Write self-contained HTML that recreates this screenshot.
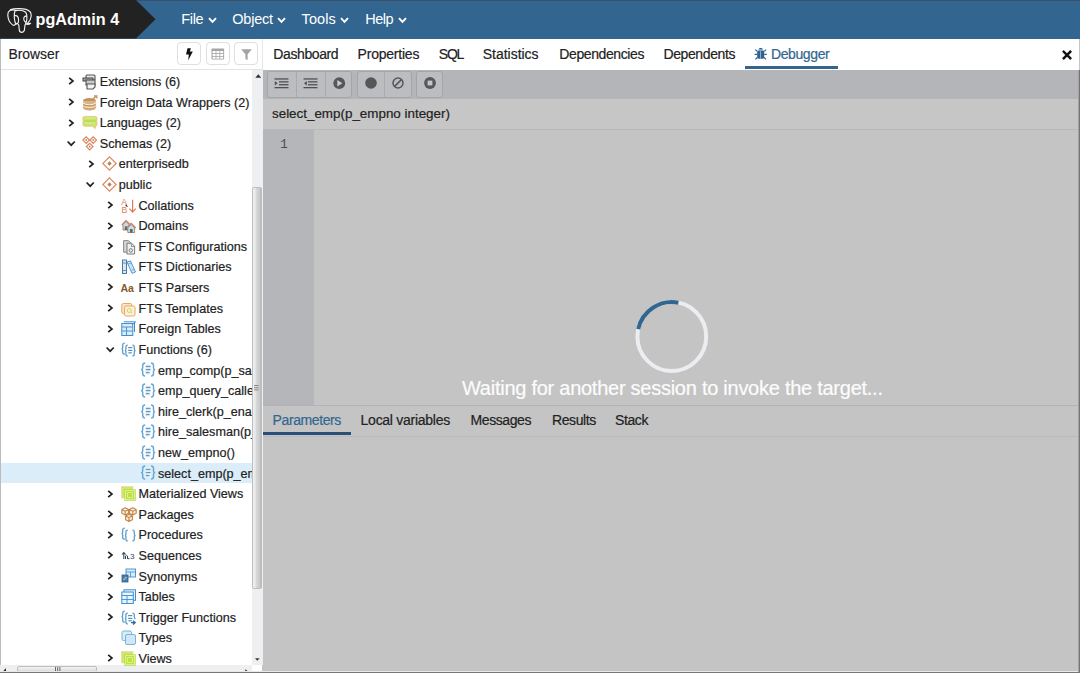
<!DOCTYPE html>
<html><head><meta charset="utf-8">
<style>
*{box-sizing:border-box;margin:0;padding:0}
html,body{width:1080px;height:673px;overflow:hidden;background:#fff;font-family:"Liberation Sans",sans-serif;color:#222}
.abs{position:absolute}
.menu{top:0.4px;height:38px;line-height:39px;color:#fff;font-size:14.5px;white-space:nowrap}
.menu svg{display:inline-block;vertical-align:middle;margin-left:4px;margin-top:0px}
.tbtn{top:42.3px;width:24.3px;height:22.8px;border:1px solid #dcdfe3;border-radius:4px;background:#fff}
.tab{-webkit-text-stroke:0.2px currentColor;top:38.5px;height:31px;line-height:31.2px;font-size:14px;letter-spacing:-0.4px;color:#222;white-space:nowrap}
.tt{-webkit-text-stroke:0.2px #222;height:20.607px;line-height:20.607px;font-size:12.6px;white-space:nowrap;color:#222}
#clip{position:absolute;left:0;top:69.5px;width:252px;height:596px;overflow:hidden}
#clipin{position:absolute;left:0;top:-69.5px;width:1080px;height:673px}
.dbtn{top:70.6px;height:27px;border:1px solid #a9aaad;background:#babbbe}
</style></head><body>
<div class="abs" style="left:0;top:0;width:1080px;height:38.5px;background:#326690"></div>
<div class="abs" style="left:0;top:0;width:1080px;height:1px;background:#3c5066"></div>
<svg class="abs" style="left:0;top:0" width="156" height="39" viewBox="0 0 156 39">
  <polygon points="0,0 136,0 155.5,19.2 136,38.5 0,38.5" fill="#222222"/>
</svg>
<svg class="abs" style="left:4px;top:5.6px" width="30" height="30" viewBox="0 0 30 30"><g fill="none" stroke="#f2f2f2" stroke-width="1.15" stroke-linecap="round" stroke-linejoin="round">
<path d="M11.2,4.3 C7,3.2 3.6,4.6 3.8,9 C4,13.5 6.3,17.3 8.6,18.9 C9.8,19.7 11,19 11.6,18.2"/>
<path d="M6.5,3.6 C10,2.6 17.5,2.2 22,3.4 C25.8,4.5 27.6,6.8 27.2,10 C26.9,13 25.4,15.6 23.6,17.2"/>
<path d="M11.6,18.2 C12.6,17.3 14.4,17.6 14.8,19.2 L15.3,24.2 C15.7,27 19.8,27 20.4,24.2 L21,19 C21.4,17.4 23,17.2 26.6,17.3 C25.5,18.3 24,18.6 22.6,18.3"/>
<path d="M11.2,4.3 C10.2,7 10.2,13 11.2,16.8 C12,18.6 14.6,18 14.6,14.5 C14.6,11 13.2,9.4 11.4,9.6"/>
<path d="M11.5,4.6 C15,4 19.5,4.5 21.4,6 C23,7.5 23,11 22.8,13.5 C22.6,15.5 22.3,16.6 21.6,17.6 M22.6,10.4 C20.5,9.6 19.6,11.5 19.8,13.2 C20,15 21.2,16.2 22.2,16"/>
</g></svg>
<div class="abs" style="left:35.5px;top:0;height:38px;line-height:39px;color:#fff;font-size:16.2px;font-weight:bold;white-space:nowrap">pgAdmin 4</div>
<div class="abs menu" style="left:181.2px;letter-spacing:-0.3px">File</div>
<div class="abs menu" style="left:232.3px;letter-spacing:-0.23px">Object</div>
<div class="abs menu" style="left:301.6px;letter-spacing:0.1px">Tools</div>
<div class="abs menu" style="left:365.2px;letter-spacing:-0.5px">Help</div>
<svg class="abs" style="left:207.6px;top:16.6px" width="9" height="7" viewBox="0 0 9 7"><path d="M1,1.2 L4.5,4.9 L8,1.2" stroke="#fff" stroke-width="1.9" fill="none"/></svg>
<svg class="abs" style="left:276.9px;top:16.6px" width="9" height="7" viewBox="0 0 9 7"><path d="M1,1.2 L4.5,4.9 L8,1.2" stroke="#fff" stroke-width="1.9" fill="none"/></svg>
<svg class="abs" style="left:340.3px;top:16.6px" width="9" height="7" viewBox="0 0 9 7"><path d="M1,1.2 L4.5,4.9 L8,1.2" stroke="#fff" stroke-width="1.9" fill="none"/></svg>
<svg class="abs" style="left:397.8px;top:16.6px" width="9" height="7" viewBox="0 0 9 7"><path d="M1,1.2 L4.5,4.9 L8,1.2" stroke="#fff" stroke-width="1.9" fill="none"/></svg>

<div class="abs" style="left:0;top:38.5px;width:262px;height:31px;border-bottom:1px solid #e3e3e3;background:#fff"></div>
<div class="abs" style="left:0;top:38.5px;width:1px;height:635px;background:#bcbcbc"></div>
<div class="abs" style="left:8.4px;top:38.5px;height:31px;line-height:31px;font-size:13.9px;color:#222;-webkit-text-stroke:0.15px #222">Browser</div>
<div class="abs tbtn" style="left:177px"></div>
<div class="abs tbtn" style="left:205.5px"></div>
<div class="abs tbtn" style="left:234px"></div>
<svg class="abs" style="left:185px;top:47px" width="9" height="14" viewBox="0 0 9 14"><path d="M2.5,1.2 L5.9,1.2 L4.8,4.4 L7.8,4.4 L3.2,13.6 L3.8,7.6 L1,7.6 Z" fill="#111"/></svg>
<svg class="abs" style="left:211px;top:47.5px" width="14" height="12" viewBox="0 0 14 12"><rect x="0.5" y="0.5" width="12.6" height="11" rx="0.8" fill="#a5a5a5"/><g fill="#fff"><rect x="1.6" y="3" width="3" height="2.1"/><rect x="5.4" y="3" width="3" height="2.1"/><rect x="9.2" y="3" width="3" height="2.1"/><rect x="1.6" y="5.9" width="3" height="2.1"/><rect x="5.4" y="5.9" width="3" height="2.1"/><rect x="9.2" y="5.9" width="3" height="2.1"/><rect x="1.6" y="8.8" width="3" height="1.9"/><rect x="5.4" y="8.8" width="3" height="1.9"/><rect x="9.2" y="8.8" width="3" height="1.9"/></g></svg>
<svg class="abs" style="left:240.5px;top:48.5px" width="11" height="12" viewBox="0 0 11 12"><path d="M0.2,0.3 H10.8 L6.6,5.2 V11.3 L4.4,9.8 V5.2 Z" fill="#a3a3a3"/></svg>
<div class="abs" style="left:262px;top:38.5px;width:1px;height:31px;background:#e4e6ea"></div>

<div class="abs" style="left:263px;top:38.5px;width:817px;height:31px;background:#fff"></div>
<div class="abs tab" style="left:273.3px">Dashboard</div>
<div class="abs tab" style="left:357.6px;letter-spacing:-0.22px">Properties</div>
<div class="abs tab" style="left:438.8px;letter-spacing:-1.2px">SQL</div>
<div class="abs tab" style="left:482.8px;letter-spacing:-0.03px">Statistics</div>
<div class="abs tab" style="left:559.3px">Dependencies</div>
<div class="abs tab" style="left:663.5px">Dependents</div>
<div class="abs tab" style="left:771px;color:#326690">Debugger</div>
<div class="abs" style="left:745px;top:66px;width:93px;height:2.5px;background:#326690"></div>

<div class="abs" style="left:262px;top:69.5px;width:818px;height:604px;background:#c4c4c4"></div>
<div class="abs" style="left:263px;top:69.5px;width:817px;height:29px;background:#b4b5b8"></div>
<div class="abs" style="left:263px;top:98.5px;width:817px;height:31px;background:#c6c6c6;border-bottom:1px solid #b8b9bc"></div>
<div class="abs" style="left:272px;top:99.3px;height:30px;line-height:30.6px;font-size:13.4px;color:#222;-webkit-text-stroke:0.2px #222">select_emp(p_empno integer)</div>
<div class="abs" style="left:263px;top:129.5px;width:51px;height:275px;background:#b5b6b9"></div>
<div class="abs" style="left:263px;top:404.5px;width:817px;height:1px;background:#b5b6b9"></div>

<!-- bug icon -->
<svg class="abs" style="left:754px;top:47px" width="14" height="14" viewBox="0 0 14 14"><g fill="#2d6190">
<path d="M4.4,2.8 C4.5,0.4 8.9,0.4 9,2.8 Z"/>
<rect x="3.2" y="3.2" width="7" height="8.6" rx="1.6"/></g>
<path d="M3.4,4.4 L1.2,2.6 M10,4.4 L12.2,2.6 M3.2,7.4 H0.7 M10.2,7.4 H12.7 M3.4,10.4 L1.4,12.4 M10,10.4 L12,12.4" stroke="#2d6190" stroke-width="1.2" fill="none"/>
<rect x="3" y="2.75" width="7.4" height="0.5" fill="#fff"/><rect x="6.35" y="4.2" width="0.7" height="7.4" fill="#c5d5e3"/></svg>
<!-- close -->
<svg class="abs" style="left:1061.5px;top:49.5px" width="10" height="10" viewBox="0 0 10 10"><path d="M1.8,1.8 L8.2,8.2 M8.2,1.8 L1.8,8.2" stroke="#111" stroke-width="2.5" stroke-linecap="square"/></svg>

<!-- debugger toolbar buttons -->
<div class="abs" style="left:266.7px;top:70.6px;width:85.8px;height:27.2px;border:1px solid #a4a5a8;border-radius:3px;background:#bcbdc0"></div>
<div class="abs" style="left:296px;top:70.6px;width:1px;height:27.2px;background:#a9aaad"></div>
<div class="abs" style="left:325px;top:70.6px;width:1px;height:27.2px;background:#a9aaad"></div>
<div class="abs" style="left:356.8px;top:70.6px;width:55px;height:27.2px;border:1px solid #a4a5a8;border-radius:3px;background:#bcbdc0"></div>
<div class="abs" style="left:384px;top:70.6px;width:1px;height:27.2px;background:#a9aaad"></div>
<div class="abs" style="left:415.9px;top:70.6px;width:27.4px;height:27.2px;border:1px solid #a4a5a8;border-radius:3px;background:#bcbdc0"></div>
<svg class="abs" style="left:273.5px;top:77.5px" width="15" height="11" viewBox="0 0 15 11"><g fill="#505050"><rect x="0.5" y="0.3" width="14" height="1.3"/><rect x="5" y="3.2" width="9.5" height="1.3"/><rect x="5" y="6.1" width="9.5" height="1.3"/><rect x="0.5" y="9" width="14" height="1.3"/><path d="M0.8,3 L3.6,5.3 L0.8,7.6 Z"/></g></svg>
<svg class="abs" style="left:303px;top:77.5px" width="15" height="11" viewBox="0 0 15 11"><g fill="#505050"><rect x="0.5" y="0.3" width="14" height="1.3"/><rect x="5" y="3.2" width="9.5" height="1.3"/><rect x="5" y="6.1" width="9.5" height="1.3"/><rect x="0.5" y="9" width="14" height="1.3"/><path d="M3.8,3 L1,5.3 L3.8,7.6 Z"/></g></svg>
<svg class="abs" style="left:332.5px;top:77.2px" width="13" height="13" viewBox="0 0 13 13"><circle cx="6.25" cy="6.2" r="5.9" fill="#575757"/><path d="M4.3,2.9 L9.4,6.2 L4.3,9.5 Z" fill="#c9cacc"/></svg>
<svg class="abs" style="left:365px;top:77.3px" width="13" height="13" viewBox="0 0 13 13"><circle cx="6" cy="6" r="5.8" fill="#575757"/></svg>
<svg class="abs" style="left:392px;top:77.3px" width="13" height="13" viewBox="0 0 13 13"><circle cx="6" cy="6" r="5" fill="none" stroke="#575757" stroke-width="1.5"/><path d="M9.4,2.6 L2.6,9.4" stroke="#575757" stroke-width="1.5"/></svg>
<svg class="abs" style="left:424px;top:77.2px" width="13" height="13" viewBox="0 0 13 13"><circle cx="6" cy="6" r="5.9" fill="#575757"/><rect x="3.6" y="3.6" width="4.8" height="4.8" fill="#c4c5c7"/></svg>

<!-- line number -->
<div class="abs" style="left:280.3px;top:134.8px;height:20px;line-height:20px;font-family:'Liberation Mono',monospace;font-size:12.4px;color:#4a4a4a">1</div>

<!-- spinner -->
<svg class="abs" style="left:630px;top:295px" width="84" height="84" viewBox="0 0 84 84">
<circle cx="41.8" cy="41.5" r="34.4" fill="none" stroke="#ebedf0" stroke-width="4"/>
<path d="M48.4,7.7 A34.4,34.4 0 0 0 8.2,34.2" fill="none" stroke="#326690" stroke-width="4"/>
</svg>
<div class="abs" style="left:462px;top:375.5px;height:24px;line-height:24px;font-size:20px;letter-spacing:-0.26px;color:#fcfcfc;-webkit-text-stroke:0.2px #fcfcfc;white-space:nowrap">Waiting for another session to invoke the target...</div>

<!-- lower tabs -->
<div class="abs" style="left:263px;top:405px;width:817px;height:1px;background:#b3b4b7"></div>
<div class="abs tab" style="left:272.6px;top:405px;height:30px;line-height:30px;color:#326690">Parameters</div>
<div class="abs tab" style="left:360.6px;top:405px;height:30px;line-height:30px;letter-spacing:-0.27px">Local variables</div>
<div class="abs tab" style="left:470.5px;top:405px;height:30px;line-height:30px">Messages</div>
<div class="abs tab" style="left:552px;top:405px;height:30px;line-height:30px">Results</div>
<div class="abs tab" style="left:615px;top:405px;height:30px;line-height:30px">Stack</div>
<div class="abs" style="left:263px;top:432.3px;width:88px;height:2.5px;background:#2a4f77"></div>
<div class="abs" style="left:263px;top:435.5px;width:817px;height:1px;background:#b8b9bc"></div>

<!-- tree scrollbars -->
<div class="abs" style="left:252.2px;top:69.8px;width:10.6px;height:595.5px;background:#eeeff1"></div>
<div class="abs" style="left:251.8px;top:187px;width:9.8px;height:402px;background:linear-gradient(to right,#f3f3f4 0%,#e4e5e7 30%,#d1d2d2 50%,#cfd0d0 75%,#bdbec1 92%);border:1px solid #bdbdbd;border-radius:2px"></div>
<svg class="abs" style="left:254px;top:385px" width="5" height="6" viewBox="0 0 5 6"><g fill="#8a8a8a"><rect x="0" y="0" width="4.6" height="1"/><rect x="0" y="2.2" width="4.6" height="1"/><rect x="0" y="4.4" width="4.6" height="1"/></g></svg>
<svg class="abs" style="left:254.8px;top:73.5px" width="7" height="4" viewBox="0 0 7 4"><path d="M0.3,3.8 L3.3,0.3 L6.3,3.8 Z" fill="#333"/></svg>
<svg class="abs" style="left:255px;top:657.8px" width="5" height="3" viewBox="0 0 5 3"><path d="M0,0.2 H4.6 L2.3,2.8 Z" fill="#333"/></svg>
<div class="abs" style="left:0;top:665.3px;width:252.2px;height:6px;background:#eeeff1"></div>
<div class="abs" style="left:17px;top:665.5px;width:80px;height:6px;background:linear-gradient(to bottom,#f4f4f4,#dcdcdc);border:1px solid #bdbdbd;border-radius:2px"></div>
<svg class="abs" style="left:54.5px;top:667px" width="6" height="4" viewBox="0 0 6 4"><g fill="#666"><rect x="0" y="0" width="1" height="4"/><rect x="2.2" y="0" width="1" height="4"/><rect x="4.4" y="0" width="1" height="4"/></g></svg>
<svg class="abs" style="left:3px;top:668px" width="4" height="4" viewBox="0 0 4 4"><path d="M3,0.3 V3.7 L0.3,3 Z" fill="#222"/></svg>
<svg class="abs" style="left:244.5px;top:668.5px" width="3" height="4" viewBox="0 0 3 4"><path d="M0.3,0.3 L2.6,2 L0.3,3.7 Z" fill="#222"/></svg>
<div class="abs" style="left:0;top:671px;width:1080px;height:1px;background:#e8e8e8"></div>
<div class="abs" style="left:0;top:672px;width:1080px;height:1px;background:#777"></div>
<div class="abs" style="left:1079px;top:38.5px;width:1px;height:31px;background:#c4c4c4"></div>
<div class="abs" style="left:1079px;top:69.5px;width:1px;height:603.5px;background:#747474"></div>
<div class="abs" style="left:1078px;top:69.5px;width:1px;height:602px;background:#a4a4a4"></div>

<div id="clip"><div id="clipin">
<div class="abs" style="left:1px;top:462.93px;width:251.5px;height:20.41px;background:#daedf9"></div>
<svg class="abs" style="left:68.00px;top:77.40px" width="7" height="8" viewBox="0 0 7 8"><path d="M1.2 0.8 L5 4 L1.2 7.2" stroke="#222" stroke-width="1.7" fill="none" stroke-linejoin="miter"/></svg>
<svg class="abs" style="left:82.30px;top:73.90px" width="16" height="16" viewBox="0 0 16 16"><rect x="4" y="1" width="9" height="5" rx="1" fill="#e6e6e6" stroke="#555" stroke-width="1.1"/>
<rect x="1" y="4" width="10" height="3" fill="#aaa" stroke="#444" stroke-width="1"/>
<rect x="4" y="6" width="9" height="5" fill="#c9c9c9" stroke="#555" stroke-width="1.1"/>
<path d="M5 10 H13 V13 L11 15 H5 Z" fill="#f2f2f2" stroke="#555" stroke-width="1.1"/></svg>
<div class="abs tt" style="left:99.80px;top:72.00px">Extensions (6)</div>
<svg class="abs" style="left:68.00px;top:98.01px" width="7" height="8" viewBox="0 0 7 8"><path d="M1.2 0.8 L5 4 L1.2 7.2" stroke="#222" stroke-width="1.7" fill="none" stroke-linejoin="miter"/></svg>
<svg class="abs" style="left:82.30px;top:94.51px" width="16" height="16" viewBox="0 0 16 16"><ellipse cx="7.5" cy="5.5" rx="6.3" ry="2.6" fill="#c69257"/>
<path d="M1.2 6 V8.5 A6.3 2.4 0 0 0 13.8 8.5 V6" fill="#d8b48c"/>
<path d="M1.2 9 V11 A6.3 2.4 0 0 0 13.8 11 V9" fill="#c69257"/>
<path d="M1.2 11.6 V13 A6.3 2.4 0 0 0 13.8 13 V11.6" fill="#d2a878"/>
<path d="M1.5 8.2 A6.3 2.2 0 0 0 13.5 8.2 M1.5 10.8 A6.3 2.2 0 0 0 13.5 10.8" stroke="#fff" stroke-width="0.9" fill="none"/>
<path d="M11 4 L14.5 0.8 M12 0.8 H14.8 V3.5" stroke="#c69257" stroke-width="1.3" fill="none"/></svg>
<div class="abs tt" style="left:99.80px;top:92.61px">Foreign Data Wrappers (2)</div>
<svg class="abs" style="left:68.00px;top:118.61px" width="7" height="8" viewBox="0 0 7 8"><path d="M1.2 0.8 L5 4 L1.2 7.2" stroke="#222" stroke-width="1.7" fill="none" stroke-linejoin="miter"/></svg>
<svg class="abs" style="left:82.30px;top:115.11px" width="16" height="16" viewBox="0 0 16 16"><path d="M2.6,1.4 H13.2 Q15,1.4 15,3.3 V4.6 Q15,6 14.4,6.2 Q15,6.6 15,7.8 V9.4 Q15,11 13.6,11.2 L13.2,13.6 L10.4,11.2 H2.6 Q0.9,11.2 0.9,9.4 V7.8 Q0.9,6.6 1.5,6.2 Q0.9,6 0.9,4.6 V3.3 Q0.9,1.4 2.6,1.4 Z" fill="#c9e66b" stroke="#f0b27c" stroke-width="0.7"/>
<path d="M2,6.1 H14" stroke="#a9cf45" stroke-width="0.9"/>
<path d="M3,3 H13 M3,8 H13" stroke="#daf08e" stroke-width="1.2"/></svg>
<div class="abs tt" style="left:99.80px;top:113.21px">Languages (2)</div>
<svg class="abs" style="left:66.50px;top:140.02px" width="9" height="7" viewBox="0 0 9 7"><path d="M0.6 1.5 L4.2 5.2 L7.8 1.5" stroke="#222" stroke-width="1.7" fill="none"/></svg>
<svg class="abs" style="left:82.30px;top:135.72px" width="16" height="16" viewBox="0 0 16 16"><g fill="none" stroke="#d9835b" stroke-width="1.2">
<path d="M4.2 0.8 L7.5 4.1 L4.2 7.4 L0.9 4.1 Z"/><path d="M11.2 0.8 L14.5 4.1 L11.2 7.4 L7.9 4.1 Z"/><path d="M7.7 7.3 L11 10.6 L7.7 13.9 L4.4 10.6 Z"/></g>
<g fill="#b9814f"><rect x="3.4" y="3.3" width="1.6" height="1.6"/><rect x="10.4" y="3.3" width="1.6" height="1.6"/><rect x="6.9" y="9.8" width="1.6" height="1.6"/></g></svg>
<div class="abs tt" style="left:99.80px;top:133.82px">Schemas (2)</div>
<svg class="abs" style="left:87.60px;top:159.83px" width="7" height="8" viewBox="0 0 7 8"><path d="M1.2 0.8 L5 4 L1.2 7.2" stroke="#222" stroke-width="1.7" fill="none" stroke-linejoin="miter"/></svg>
<svg class="abs" style="left:101.70px;top:156.33px" width="16" height="16" viewBox="0 0 16 16"><path d="M7.5 0.8 L14.2 7.5 L7.5 14.2 L0.8 7.5 Z" fill="none" stroke="#db8a63" stroke-width="1.2"/>
<path d="M7.5 5.3 L9.7 7.5 L7.5 9.7 L5.3 7.5 Z" fill="#b7834f"/></svg>
<div class="abs tt" style="left:118.80px;top:154.43px">enterprisedb</div>
<svg class="abs" style="left:86.10px;top:181.23px" width="9" height="7" viewBox="0 0 9 7"><path d="M0.6 1.5 L4.2 5.2 L7.8 1.5" stroke="#222" stroke-width="1.7" fill="none"/></svg>
<svg class="abs" style="left:101.70px;top:176.94px" width="16" height="16" viewBox="0 0 16 16"><path d="M7.5 0.8 L14.2 7.5 L7.5 14.2 L0.8 7.5 Z" fill="none" stroke="#db8a63" stroke-width="1.2"/>
<path d="M7.5 5.3 L9.7 7.5 L7.5 9.7 L5.3 7.5 Z" fill="#b7834f"/></svg>
<div class="abs tt" style="left:118.80px;top:175.03px">public</div>
<svg class="abs" style="left:107.00px;top:201.04px" width="7" height="8" viewBox="0 0 7 8"><path d="M1.2 0.8 L5 4 L1.2 7.2" stroke="#222" stroke-width="1.7" fill="none" stroke-linejoin="miter"/></svg>
<svg class="abs" style="left:121.30px;top:197.54px" width="16" height="16" viewBox="0 0 16 16"><text x="0.3" y="7.2" font-family="Liberation Sans" font-size="8.6" fill="#e07b54">A</text>
<text x="0.6" y="15" font-family="Liberation Sans" font-size="8.6" fill="#e07b54">B</text>
<path d="M4.6 6.8 L6.4 8.6" stroke="#222" stroke-width="1.1"/>
<path d="M11.6 1.8 V14 M8.4 10.6 L11.6 14 L14.8 10.6" stroke="#e07b54" stroke-width="1.2" fill="none"/></svg>
<div class="abs tt" style="left:138.50px;top:195.64px">Collations</div>
<svg class="abs" style="left:107.00px;top:221.65px" width="7" height="8" viewBox="0 0 7 8"><path d="M1.2 0.8 L5 4 L1.2 7.2" stroke="#222" stroke-width="1.7" fill="none" stroke-linejoin="miter"/></svg>
<svg class="abs" style="left:121.30px;top:218.15px" width="16" height="16" viewBox="0 0 16 16"><path d="M0.8 7 L5 2.5 L9 6.5" stroke="#e07b54" stroke-width="1.2" fill="none"/>
<path d="M2 6.5 V12 H8 V6.5 L5 3.5 Z" fill="#bfe0f4" stroke="#777" stroke-width="0.8"/>
<rect x="3.8" y="8.3" width="2.4" height="3.7" fill="#8a5a2b"/>
<path d="M5.5 10 L10.2 5.3 L14.8 10" stroke="#e07b54" stroke-width="1.2" fill="none"/>
<path d="M6.8 9.5 V14.5 H13.6 V9.5 L10.2 6.5 Z" fill="#bfe0f4" stroke="#777" stroke-width="0.8"/>
<rect x="9" y="11" width="2.6" height="3.5" fill="#8a5a2b"/></svg>
<div class="abs tt" style="left:138.50px;top:216.25px">Domains</div>
<svg class="abs" style="left:107.00px;top:242.26px" width="7" height="8" viewBox="0 0 7 8"><path d="M1.2 0.8 L5 4 L1.2 7.2" stroke="#222" stroke-width="1.7" fill="none" stroke-linejoin="miter"/></svg>
<svg class="abs" style="left:121.30px;top:238.76px" width="16" height="16" viewBox="0 0 16 16"><path d="M2.6,1.6 H7.5 L9.5,3.6 V13.2 H2.6 Z" fill="#d4d4d4" stroke="#8a8a8a" stroke-width="1"/>
<path d="M6,4.2 H10.6 L13.6,7.2 V15 H6 Z" fill="#f0f0f0" stroke="#7a7a7a" stroke-width="1"/>
<path d="M10.4,4.3 V7.4 H13.5" fill="none" stroke="#7a7a7a" stroke-width="0.8"/>
<circle cx="9.8" cy="11.4" r="1.7" fill="none" stroke="#7a7a7a" stroke-width="1"/></svg>
<div class="abs tt" style="left:138.50px;top:236.86px">FTS Configurations</div>
<svg class="abs" style="left:107.00px;top:262.86px" width="7" height="8" viewBox="0 0 7 8"><path d="M1.2 0.8 L5 4 L1.2 7.2" stroke="#222" stroke-width="1.7" fill="none" stroke-linejoin="miter"/></svg>
<svg class="abs" style="left:121.30px;top:259.36px" width="16" height="16" viewBox="0 0 16 16"><rect x="1.5" y="1" width="4" height="13.5" fill="#d5e8f5" stroke="#3f6f9a" stroke-width="0.9"/>
<path d="M2 4 H5 M2 11.5 H5" stroke="#3f6f9a" stroke-width="0.7"/>
<path d="M6 3 L9.5 1.8 L14.5 13 L11 14.3 Z" fill="#cde6f7" stroke="#4a90c8" stroke-width="0.9"/>
<path d="M7.3 5 L10 4 M10.5 11.2 L13 10.2" stroke="#4a90c8" stroke-width="0.7"/></svg>
<div class="abs tt" style="left:138.50px;top:257.46px">FTS Dictionaries</div>
<svg class="abs" style="left:107.00px;top:283.47px" width="7" height="8" viewBox="0 0 7 8"><path d="M1.2 0.8 L5 4 L1.2 7.2" stroke="#222" stroke-width="1.7" fill="none" stroke-linejoin="miter"/></svg>
<svg class="abs" style="left:121.30px;top:279.97px" width="16" height="16" viewBox="0 0 16 16"><text x="-0.6" y="12" font-family="Liberation Sans" font-weight="bold" font-size="10.6" fill="#8a5a2b">Aa</text></svg>
<div class="abs tt" style="left:138.50px;top:278.07px">FTS Parsers</div>
<svg class="abs" style="left:107.00px;top:304.08px" width="7" height="8" viewBox="0 0 7 8"><path d="M1.2 0.8 L5 4 L1.2 7.2" stroke="#222" stroke-width="1.7" fill="none" stroke-linejoin="miter"/></svg>
<svg class="abs" style="left:121.30px;top:300.58px" width="16" height="16" viewBox="0 0 16 16"><rect x="0.8" y="2.5" width="10" height="10" rx="1.5" fill="#fbe6c9" stroke="#e8a95c" stroke-width="1"/>
<rect x="3.5" y="5" width="10.5" height="10" rx="1.5" fill="#fdf0dc" stroke="#e8a95c" stroke-width="1"/>
<circle cx="8.3" cy="9.5" r="2" fill="none" stroke="#c8d95a" stroke-width="1"/>
<path d="M9.8 11 L11.2 12.4" stroke="#c8d95a" stroke-width="1"/></svg>
<div class="abs tt" style="left:138.50px;top:298.68px">FTS Templates</div>
<svg class="abs" style="left:107.00px;top:324.68px" width="7" height="8" viewBox="0 0 7 8"><path d="M1.2 0.8 L5 4 L1.2 7.2" stroke="#222" stroke-width="1.7" fill="none" stroke-linejoin="miter"/></svg>
<svg class="abs" style="left:121.30px;top:321.18px" width="16" height="16" viewBox="0 0 16 16"><rect x="0.8" y="2.5" width="11" height="12" fill="#d9ecf9" stroke="#3e8ed0" stroke-width="1"/>
<path d="M0.8 6 H11.8 M0.8 10 H11.8 M5.5 6 V14.5" stroke="#3e8ed0" stroke-width="0.9"/>
<path d="M3 0.8 H13.5 V11" stroke="#3e8ed0" stroke-width="1" fill="none"/>
<path d="M11 3.5 L15 0.5" stroke="#3e8ed0" stroke-width="1"/></svg>
<div class="abs tt" style="left:138.50px;top:319.28px">Foreign Tables</div>
<svg class="abs" style="left:105.50px;top:346.09px" width="9" height="7" viewBox="0 0 9 7"><path d="M0.6 1.5 L4.2 5.2 L7.8 1.5" stroke="#222" stroke-width="1.7" fill="none"/></svg>
<svg class="abs" style="left:121.30px;top:341.79px" width="16" height="16" viewBox="0 0 16 16"><g fill="none" stroke="#5f9fcb" stroke-width="1.3">
<path d="M3.8,1.1 Q1.7,1.1 1.7,3.2 V5.6 Q1.7,6.7 0.5,6.7 Q1.7,6.7 1.7,7.8 V10.2 Q1.7,12.2 3.8,12.2"/>
<path d="M6.8,3.1 Q4.9,3.1 4.9,5 V7.4 Q4.9,8.5 3.9,8.5 Q4.9,8.5 4.9,9.6 V11.9 Q4.9,13.8 6.8,13.8"/>
<path d="M11.4,3.1 Q13.3,3.1 13.3,5 V7.4 Q13.3,8.5 14.6,8.5 Q13.3,8.5 13.3,9.6 V11.9 Q13.3,13.8 11.4,13.8"/></g><g fill="#5a8fb8"><rect x="7.1" y="5" width="4.2" height="1.2"/><rect x="7.1" y="7.8" width="4.2" height="1.2"/><rect x="7.4" y="10.2" width="3.4" height="1.2"/></g></svg>
<div class="abs tt" style="left:138.50px;top:339.89px">Functions (6)</div>
<svg class="abs" style="left:140.30px;top:362.40px" width="16" height="16" viewBox="0 0 16 16"><g fill="none" stroke="#6aa8d4" stroke-width="1.45">
<path d="M5.2,0.9 Q2.7,0.9 2.7,3.4 V5.9 Q2.7,7.6 1,7.6 Q2.7,7.6 2.7,9.3 V11.6 Q2.7,14.1 5.2,14.1"/>
<path d="M11,0.9 Q13.5,0.9 13.5,3.4 V5.9 Q13.5,7.6 15.2,7.6 Q13.5,7.6 13.5,9.3 V11.6 Q13.5,14.1 11,14.1"/></g>
<rect x="5.4" y="2.6" width="5.4" height="10" fill="#eef6fc"/><g fill="#6399c2"><rect x="5.8" y="3.8" width="4.7" height="1.35"/><rect x="5.8" y="6.9" width="4.7" height="1.35"/><rect x="5.8" y="9.9" width="3.7" height="1.35"/></g></svg>
<div class="abs tt" style="left:158.00px;top:360.50px">emp_comp(p_sal numeric, p_comm numeric)</div>
<svg class="abs" style="left:140.30px;top:383.00px" width="16" height="16" viewBox="0 0 16 16"><g fill="none" stroke="#6aa8d4" stroke-width="1.45">
<path d="M5.2,0.9 Q2.7,0.9 2.7,3.4 V5.9 Q2.7,7.6 1,7.6 Q2.7,7.6 2.7,9.3 V11.6 Q2.7,14.1 5.2,14.1"/>
<path d="M11,0.9 Q13.5,0.9 13.5,3.4 V5.9 Q13.5,7.6 15.2,7.6 Q13.5,7.6 13.5,9.3 V11.6 Q13.5,14.1 11,14.1"/></g>
<rect x="5.4" y="2.6" width="5.4" height="10" fill="#eef6fc"/><g fill="#6399c2"><rect x="5.8" y="3.8" width="4.7" height="1.35"/><rect x="5.8" y="6.9" width="4.7" height="1.35"/><rect x="5.8" y="9.9" width="3.7" height="1.35"/></g></svg>
<div class="abs tt" style="left:158.00px;top:381.11px">emp_query_caller()</div>
<svg class="abs" style="left:140.30px;top:403.61px" width="16" height="16" viewBox="0 0 16 16"><g fill="none" stroke="#6aa8d4" stroke-width="1.45">
<path d="M5.2,0.9 Q2.7,0.9 2.7,3.4 V5.9 Q2.7,7.6 1,7.6 Q2.7,7.6 2.7,9.3 V11.6 Q2.7,14.1 5.2,14.1"/>
<path d="M11,0.9 Q13.5,0.9 13.5,3.4 V5.9 Q13.5,7.6 15.2,7.6 Q13.5,7.6 13.5,9.3 V11.6 Q13.5,14.1 11,14.1"/></g>
<rect x="5.4" y="2.6" width="5.4" height="10" fill="#eef6fc"/><g fill="#6399c2"><rect x="5.8" y="3.8" width="4.7" height="1.35"/><rect x="5.8" y="6.9" width="4.7" height="1.35"/><rect x="5.8" y="9.9" width="3.7" height="1.35"/></g></svg>
<div class="abs tt" style="left:158.00px;top:401.71px">hire_clerk(p_ename character varying, p_deptno numeric)</div>
<svg class="abs" style="left:140.30px;top:424.22px" width="16" height="16" viewBox="0 0 16 16"><g fill="none" stroke="#6aa8d4" stroke-width="1.45">
<path d="M5.2,0.9 Q2.7,0.9 2.7,3.4 V5.9 Q2.7,7.6 1,7.6 Q2.7,7.6 2.7,9.3 V11.6 Q2.7,14.1 5.2,14.1"/>
<path d="M11,0.9 Q13.5,0.9 13.5,3.4 V5.9 Q13.5,7.6 15.2,7.6 Q13.5,7.6 13.5,9.3 V11.6 Q13.5,14.1 11,14.1"/></g>
<rect x="5.4" y="2.6" width="5.4" height="10" fill="#eef6fc"/><g fill="#6399c2"><rect x="5.8" y="3.8" width="4.7" height="1.35"/><rect x="5.8" y="6.9" width="4.7" height="1.35"/><rect x="5.8" y="9.9" width="3.7" height="1.35"/></g></svg>
<div class="abs tt" style="left:158.00px;top:422.32px">hire_salesman(p_ename character varying, p_sal numeric)</div>
<svg class="abs" style="left:140.30px;top:444.83px" width="16" height="16" viewBox="0 0 16 16"><g fill="none" stroke="#6aa8d4" stroke-width="1.45">
<path d="M5.2,0.9 Q2.7,0.9 2.7,3.4 V5.9 Q2.7,7.6 1,7.6 Q2.7,7.6 2.7,9.3 V11.6 Q2.7,14.1 5.2,14.1"/>
<path d="M11,0.9 Q13.5,0.9 13.5,3.4 V5.9 Q13.5,7.6 15.2,7.6 Q13.5,7.6 13.5,9.3 V11.6 Q13.5,14.1 11,14.1"/></g>
<rect x="5.4" y="2.6" width="5.4" height="10" fill="#eef6fc"/><g fill="#6399c2"><rect x="5.8" y="3.8" width="4.7" height="1.35"/><rect x="5.8" y="6.9" width="4.7" height="1.35"/><rect x="5.8" y="9.9" width="3.7" height="1.35"/></g></svg>
<div class="abs tt" style="left:158.00px;top:442.93px">new_empno()</div>
<svg class="abs" style="left:140.30px;top:465.43px" width="16" height="16" viewBox="0 0 16 16"><g fill="none" stroke="#6aa8d4" stroke-width="1.45">
<path d="M5.2,0.9 Q2.7,0.9 2.7,3.4 V5.9 Q2.7,7.6 1,7.6 Q2.7,7.6 2.7,9.3 V11.6 Q2.7,14.1 5.2,14.1"/>
<path d="M11,0.9 Q13.5,0.9 13.5,3.4 V5.9 Q13.5,7.6 15.2,7.6 Q13.5,7.6 13.5,9.3 V11.6 Q13.5,14.1 11,14.1"/></g>
<rect x="5.4" y="2.6" width="5.4" height="10" fill="#eef6fc"/><g fill="#6399c2"><rect x="5.8" y="3.8" width="4.7" height="1.35"/><rect x="5.8" y="6.9" width="4.7" height="1.35"/><rect x="5.8" y="9.9" width="3.7" height="1.35"/></g></svg>
<div class="abs tt" style="left:158.00px;top:463.53px">select_emp(p_empno integer)</div>
<svg class="abs" style="left:107.00px;top:489.54px" width="7" height="8" viewBox="0 0 7 8"><path d="M1.2 0.8 L5 4 L1.2 7.2" stroke="#222" stroke-width="1.7" fill="none" stroke-linejoin="miter"/></svg>
<svg class="abs" style="left:121.30px;top:486.04px" width="16" height="16" viewBox="0 0 16 16"><rect x="0.6" y="0.6" width="11.4" height="11.4" fill="#bde044" stroke="#f3c9a8" stroke-width="0.5"/>
<rect x="3.2" y="3.2" width="11.6" height="11.6" fill="#bde044"/>
<path d="M2,12 V2 H12" fill="none" stroke="#e4f3a6" stroke-width="0.8"/>
<rect x="4.4" y="4.4" width="9.2" height="9.2" fill="none" stroke="#e4f3a6" stroke-width="0.8"/>
<rect x="6.6" y="6.6" width="4.8" height="4.8" fill="none" stroke="#e4f3a6" stroke-width="0.8"/></svg>
<div class="abs tt" style="left:138.50px;top:484.14px">Materialized Views</div>
<svg class="abs" style="left:107.00px;top:510.15px" width="7" height="8" viewBox="0 0 7 8"><path d="M1.2 0.8 L5 4 L1.2 7.2" stroke="#222" stroke-width="1.7" fill="none" stroke-linejoin="miter"/></svg>
<svg class="abs" style="left:121.30px;top:506.65px" width="16" height="16" viewBox="0 0 16 16"><g fill="#fbeede" stroke="#c2864a" stroke-width="1.1" stroke-linejoin="round">
<path d="M4.2,0.8 L7.6,2.5 V6.3 L4.2,8 L0.8,6.3 V2.5 Z M0.8,2.5 L4.2,4.2 L7.6,2.5 M4.2,4.2 V8"/>
<path d="M11.8,0.8 L15.2,2.5 V6.3 L11.8,8 L8.4,6.3 V2.5 Z M8.4,2.5 L11.8,4.2 L15.2,2.5 M11.8,4.2 V8"/>
<path d="M8,7.2 L11.4,8.9 V12.7 L8,14.4 L4.6,12.7 V8.9 Z M4.6,8.9 L8,10.6 L11.4,8.9 M8,10.6 V14.4"/></g></svg>
<div class="abs tt" style="left:138.50px;top:504.75px">Packages</div>
<svg class="abs" style="left:107.00px;top:530.75px" width="7" height="8" viewBox="0 0 7 8"><path d="M1.2 0.8 L5 4 L1.2 7.2" stroke="#222" stroke-width="1.7" fill="none" stroke-linejoin="miter"/></svg>
<svg class="abs" style="left:121.30px;top:527.25px" width="16" height="16" viewBox="0 0 16 16"><g fill="none" stroke="#5f9fcb" stroke-width="1.3">
<path d="M3.8,1.1 Q1.7,1.1 1.7,3.2 V5.6 Q1.7,6.7 0.5,6.7 Q1.7,6.7 1.7,7.8 V10.2 Q1.7,12.2 3.8,12.2"/>
<path d="M6.8,3.1 Q4.9,3.1 4.9,5 V7.4 Q4.9,8.5 3.9,8.5 Q4.9,8.5 4.9,9.6 V11.9 Q4.9,13.8 6.8,13.8"/>
<path d="M11.4,3.1 Q13.3,3.1 13.3,5 V7.4 Q13.3,8.5 14.6,8.5 Q13.3,8.5 13.3,9.6 V11.9 Q13.3,13.8 11.4,13.8"/></g></svg>
<div class="abs tt" style="left:138.50px;top:525.35px">Procedures</div>
<svg class="abs" style="left:107.00px;top:551.36px" width="7" height="8" viewBox="0 0 7 8"><path d="M1.2 0.8 L5 4 L1.2 7.2" stroke="#222" stroke-width="1.7" fill="none" stroke-linejoin="miter"/></svg>
<svg class="abs" style="left:121.30px;top:547.86px" width="16" height="16" viewBox="0 0 16 16"><path d="M1 6.5 L2.8 4.5 L4.6 6.5 M2.8 4.8 V11" stroke="#34495e" stroke-width="1.1" fill="none"/>
<path d="M4.5 11 V8 Q5.5 6.5 6.5 8 V11" stroke="#34495e" stroke-width="1" fill="none"/>
<rect x="7.2" y="10" width="1.2" height="1.2" fill="#34495e"/>
<text x="9" y="11.2" font-family="Liberation Sans" font-size="8" fill="#34495e">3</text></svg>
<div class="abs tt" style="left:138.50px;top:545.96px">Sequences</div>
<svg class="abs" style="left:107.00px;top:571.97px" width="7" height="8" viewBox="0 0 7 8"><path d="M1.2 0.8 L5 4 L1.2 7.2" stroke="#222" stroke-width="1.7" fill="none" stroke-linejoin="miter"/></svg>
<svg class="abs" style="left:121.30px;top:568.47px" width="16" height="16" viewBox="0 0 16 16"><rect x="5" y="1" width="9.5" height="8" fill="#d9ecf9" stroke="#3e8ed0" stroke-width="0.9"/>
<path d="M5 4 H14.5 M9.5 4 V9" stroke="#3e8ed0" stroke-width="0.8"/>
<rect x="1" y="7" width="6" height="7" fill="#4d7ea8" stroke="#2f5f88" stroke-width="0.8"/>
<path d="M2.5 12 L5.5 9" stroke="#fff" stroke-width="0.8"/></svg>
<div class="abs tt" style="left:138.50px;top:566.57px">Synonyms</div>
<svg class="abs" style="left:107.00px;top:592.57px" width="7" height="8" viewBox="0 0 7 8"><path d="M1.2 0.8 L5 4 L1.2 7.2" stroke="#222" stroke-width="1.7" fill="none" stroke-linejoin="miter"/></svg>
<svg class="abs" style="left:121.30px;top:589.07px" width="16" height="16" viewBox="0 0 16 16"><rect x="3" y="0.8" width="11.5" height="10.5" fill="#e9f4fb" stroke="#3e8ed0" stroke-width="1"/>
<rect x="0.8" y="3" width="11.5" height="11.5" fill="#e9f4fb" stroke="#3e8ed0" stroke-width="1"/>
<path d="M0.8 6.5 H12.3 M0.8 10.5 H12.3 M6 6.5 V14.5" stroke="#3e8ed0" stroke-width="0.9"/></svg>
<div class="abs tt" style="left:138.50px;top:587.17px">Tables</div>
<svg class="abs" style="left:107.00px;top:613.18px" width="7" height="8" viewBox="0 0 7 8"><path d="M1.2 0.8 L5 4 L1.2 7.2" stroke="#222" stroke-width="1.7" fill="none" stroke-linejoin="miter"/></svg>
<svg class="abs" style="left:121.30px;top:609.68px" width="16" height="16" viewBox="0 0 16 16"><g fill="none" stroke="#5f9fcb" stroke-width="1.3">
<path d="M3.8,1.1 Q1.7,1.1 1.7,3.2 V5.6 Q1.7,6.7 0.5,6.7 Q1.7,6.7 1.7,7.8 V10.2 Q1.7,12.2 3.8,12.2"/>
<path d="M6.8,3.1 Q4.9,3.1 4.9,5 V7.4 Q4.9,8.5 3.9,8.5 Q4.9,8.5 4.9,9.6 V11.9 Q4.9,13.8 6.8,13.8"/>
<path d="M11.4,3.1 Q13.3,3.1 13.3,5 V7.4 Q13.3,8.5 14.6,8.5"/></g><g fill="#5a8fb8"><rect x="7.1" y="5" width="4.2" height="1.2"/><rect x="7.1" y="7.8" width="4.2" height="1.2"/><rect x="7.4" y="10.2" width="3.4" height="1.2"/></g><path d="M10,12.6 H13.6 M12,10.8 L14.2,12.6 L12,14.4" stroke="#2f6aa0" stroke-width="1.3" fill="none"/></svg>
<div class="abs tt" style="left:138.50px;top:607.78px">Trigger Functions</div>
<svg class="abs" style="left:121.30px;top:630.29px" width="16" height="16" viewBox="0 0 16 16"><rect x="1" y="1" width="9.5" height="9.5" rx="1.5" fill="#d6ecf8" stroke="#7fb3d6" stroke-width="1"/>
<rect x="4.5" y="4.5" width="10" height="10" rx="1.5" fill="#cfe7f6" stroke="#7fb3d6" stroke-width="1"/></svg>
<div class="abs tt" style="left:138.50px;top:628.39px">Types</div>
<svg class="abs" style="left:107.00px;top:654.40px" width="7" height="8" viewBox="0 0 7 8"><path d="M1.2 0.8 L5 4 L1.2 7.2" stroke="#222" stroke-width="1.7" fill="none" stroke-linejoin="miter"/></svg>
<svg class="abs" style="left:121.30px;top:650.90px" width="16" height="16" viewBox="0 0 16 16"><rect x="0.6" y="0.6" width="11.4" height="11.4" fill="#bde044" stroke="#f3c9a8" stroke-width="0.5"/>
<rect x="3.2" y="3.2" width="11.6" height="11.6" fill="#bde044"/>
<path d="M2,12 V2 H12" fill="none" stroke="#e4f3a6" stroke-width="0.8"/>
<rect x="4.4" y="4.4" width="9.2" height="9.2" fill="none" stroke="#e4f3a6" stroke-width="0.8"/>
<rect x="6.6" y="6.6" width="4.8" height="4.8" fill="none" stroke="#e4f3a6" stroke-width="0.8"/></svg>
<div class="abs tt" style="left:138.50px;top:649.00px">Views</div>
</div></div>
</body></html>
